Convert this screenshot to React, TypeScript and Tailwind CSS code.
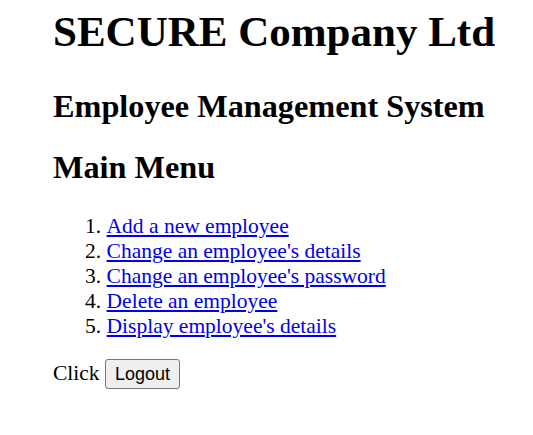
export default function App() {
  const items = [
    'Add a new employee',
    "Change an employee's details",
    "Change an employee's password",
    'Delete an employee',
    "Display employee's details",
  ];

  return (
    <div className="min-h-screen bg-white pl-[53px] pt-[7px] font-['Liberation_Serif',serif] text-[21.5px] leading-[normal] text-black">
      <h1 className="text-[43px] font-bold leading-[normal]">SECURE Company Ltd</h1>
      <h2 className="mt-[31.5px] text-[32.25px] font-bold leading-[normal]">Employee Management System</h2>
      <h2 className="mt-[24px] text-[32.25px] font-bold leading-[normal]">Main Menu</h2>
      <ol className="mt-[28.5px] list-decimal pl-[53.6px]">
        {items.map((item) => (
          <li key={item}>
            <a href="#" className="text-[#0000ee] underline">
              {item}
            </a>
          </li>
        ))}
      </ol>
      <p className="mt-[20px]">
        Click{' '}
        <button className="h-[30px] rounded-[3px] border border-[#767676] bg-[#efefef] px-[9px] font-['Liberation_Sans',Arial,sans-serif] text-[18px] leading-[normal] text-black">
          Logout
        </button>
      </p>
    </div>
  );
}
